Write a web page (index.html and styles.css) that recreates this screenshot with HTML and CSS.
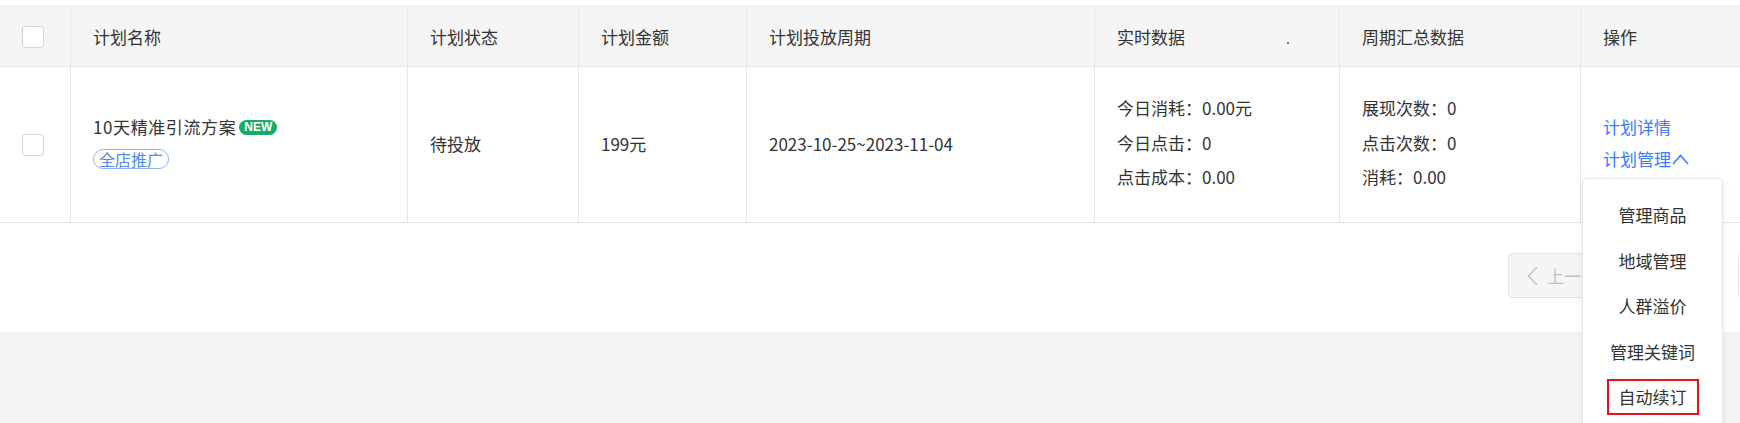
FILE: index.html
```html
<!DOCTYPE html>
<html lang="zh-CN">
<head>
    <meta charset="UTF-8">
    <meta name="viewport" content="width=device-width, initial-scale=1.0">
    <title>推广计划列表</title>
    <link rel="stylesheet" href="styles.css">
</head>
<body>
    <div class="panel">
        <div class="plan-table">
            <!-- 表头 -->
            <div class="cell head check-cell"><span class="checkbox"></span></div>
            <div class="cell head">计划名称</div>
            <div class="cell head">计划状态</div>
            <div class="cell head">计划金额</div>
            <div class="cell head">计划投放周期</div>
            <div class="cell head">实时数据<span class="dot"></span></div>
            <div class="cell head">周期汇总数据</div>
            <div class="cell head">操作</div>

            <!-- 数据行 -->
            <div class="cell body check-cell"><span class="checkbox"></span></div>
            <div class="cell body name-cell">
                <div class="plan-name">10天精准引流方案<span class="badge-new">NEW</span></div>
                <span class="tag">全店推广</span>
            </div>
            <div class="cell body">待投放</div>
            <div class="cell body">199元</div>
            <div class="cell body">2023-10-25~2023-11-04</div>
            <div class="cell body">
                <ul class="stats">
                    <li>今日消耗：0.00元</li>
                    <li>今日点击：0</li>
                    <li>点击成本：0.00</li>
                </ul>
            </div>
            <div class="cell body">
                <ul class="stats">
                    <li>展现次数：0</li>
                    <li>点击次数：0</li>
                    <li>消耗：0.00</li>
                </ul>
            </div>
            <div class="cell body op-cell">
                <div class="op-links">
                    <a class="op-link" href="#">计划详情</a>
                    <a class="op-link" href="#">计划管理<svg class="caret" width="17" height="11" viewBox="0 0 17 11"><polyline points="1,10 8.5,1.5 16,10" fill="none" stroke="currentColor" stroke-width="1.5"/></svg></a>
                </div>
                <div class="menu">
                    <div class="menu-item">管理商品</div>
                    <div class="menu-item">地域管理</div>
                    <div class="menu-item">人群溢价</div>
                    <div class="menu-item">管理关键词</div>
                    <div class="menu-item"><span class="mark">自动续订</span></div>
                </div>
            </div>
        </div>

        <div class="pager">
            <button class="page-btn page-prev" type="button" disabled>
                <svg width="11" height="20" viewBox="0 0 11 20"><polyline points="10,1 1.5,10 10,19" fill="none" stroke="currentColor" stroke-width="1.5"/></svg>
                上一页
            </button>
            <button class="page-btn" type="button">1</button>
            <button class="page-btn" type="button">2</button>
            <button class="page-btn page-last" type="button">3</button>
        </div>
    </div>
</body>
</html>
```

FILE: styles.css
```css
body {
    margin: 0;
    min-height: 100vh;
    overflow: hidden;
    background-color: #f5f5f5;
    font-family: "Noto Sans CJK SC", "Noto Sans", sans-serif;
    font-size: 17px;
    color: #333;
}

.panel {
    background-color: #fff;
    height: 332px;
    padding-top: 6px;
    box-sizing: border-box;
}

.plan-table {
    display: grid;
    grid-template-columns: 70px 337px 171px 168px 348px 245px 241px 240px;
    width: 1820px;
    border-top: 1px solid #e8e8e8;
}

.cell {
    box-sizing: border-box;
    display: flex;
    align-items: center;
    padding: 0 22px;
    border-left: 1px solid #e8e8e8;
    border-bottom: 1px solid #e6e6e6;
    white-space: nowrap;
}

.cell.head {
    height: 60px;
    background-color: #f5f5f5;
    position: relative;
}

.cell.body {
    height: 156px;
    padding-bottom: 3px;
}

.check-cell {
    border-left: none;
    padding-left: 22px;
}

.cell.body.check-cell {
    padding-bottom: 0;
}

.checkbox {
    width: 20px;
    height: 20px;
    border: 1px solid #d6d6d6;
    border-radius: 3px;
    background-color: #fff;
}

.dot {
    position: absolute;
    left: 192px;
    top: 35px;
    width: 2px;
    height: 2px;
    border-radius: 50%;
    background-color: #e8142b;
}

.name-cell {
    flex-direction: column;
    align-items: flex-start;
    justify-content: center;
}

.cell.body.name-cell {
    padding-bottom: 5px;
}

.plan-name {
    display: flex;
    align-items: center;
    line-height: 24px;
    letter-spacing: 0.6px;
}

.badge-new {
    flex-shrink: 0;
    margin-left: 3px;
    width: 38px;
    height: 15px;
    border-radius: 8px;
    background-color: #16ad69;
    color: #fff;
    font-family: "Liberation Sans", sans-serif;
    font-size: 12px;
    font-weight: bold;
    line-height: 15px;
    letter-spacing: 0;
    text-align: center;
}

.tag {
    margin-top: 10px;
    height: 20px;
    padding: 0 5px;
    border: 1px solid #8fb2ff;
    border-radius: 10px;
    box-sizing: border-box;
    color: #5288ff;
    font-size: 16px;
    line-height: 18px;
}

.stats {
    list-style: none;
    margin: 0;
    padding: 0;
    line-height: 34.5px;
}

.op-cell {
    position: relative;
}

.op-links {
    display: flex;
    flex-direction: column;
    line-height: 32px;
}

.op-link {
    display: flex;
    align-items: center;
    color: #3a7bff;
    text-decoration: none;
}

.caret {
    margin-left: 1px;
}

.menu {
    position: absolute;
    top: 111px;
    left: 1px;
    width: 141px;
    box-sizing: border-box;
    padding-top: 13px;
    padding-bottom: 12px;
    background-color: #fff;
    border: 1px solid #e6e6e6;
    border-radius: 4px;
    box-shadow: 0 2px 8px rgba(0, 0, 0, 0.08);
    z-index: 2;
}

.menu-item {
    height: 45.5px;
    display: flex;
    align-items: center;
    justify-content: center;
}

.mark {
    border: 2px solid #e8101c;
    padding: 4px 10px;
    line-height: 24px;
}

.pager {
    display: flex;
    gap: 15px;
    margin: 30px 0 0 1508px;
    height: 45px;
}

.page-btn {
    box-sizing: border-box;
    height: 45px;
    width: 40px;
    padding: 0;
    border: 1px solid #e4e4e4;
    border-radius: 4px;
    background-color: #fff;
    color: #333;
    font-family: inherit;
    font-size: 17px;
    flex-shrink: 0;
}

.page-prev {
    width: 105px;
    display: flex;
    align-items: center;
    gap: 9px;
    padding-left: 18px;
    background-color: #f5f5f5;
    color: #c2c2c2;
}

.page-last {
    width: 45px;
}
```
